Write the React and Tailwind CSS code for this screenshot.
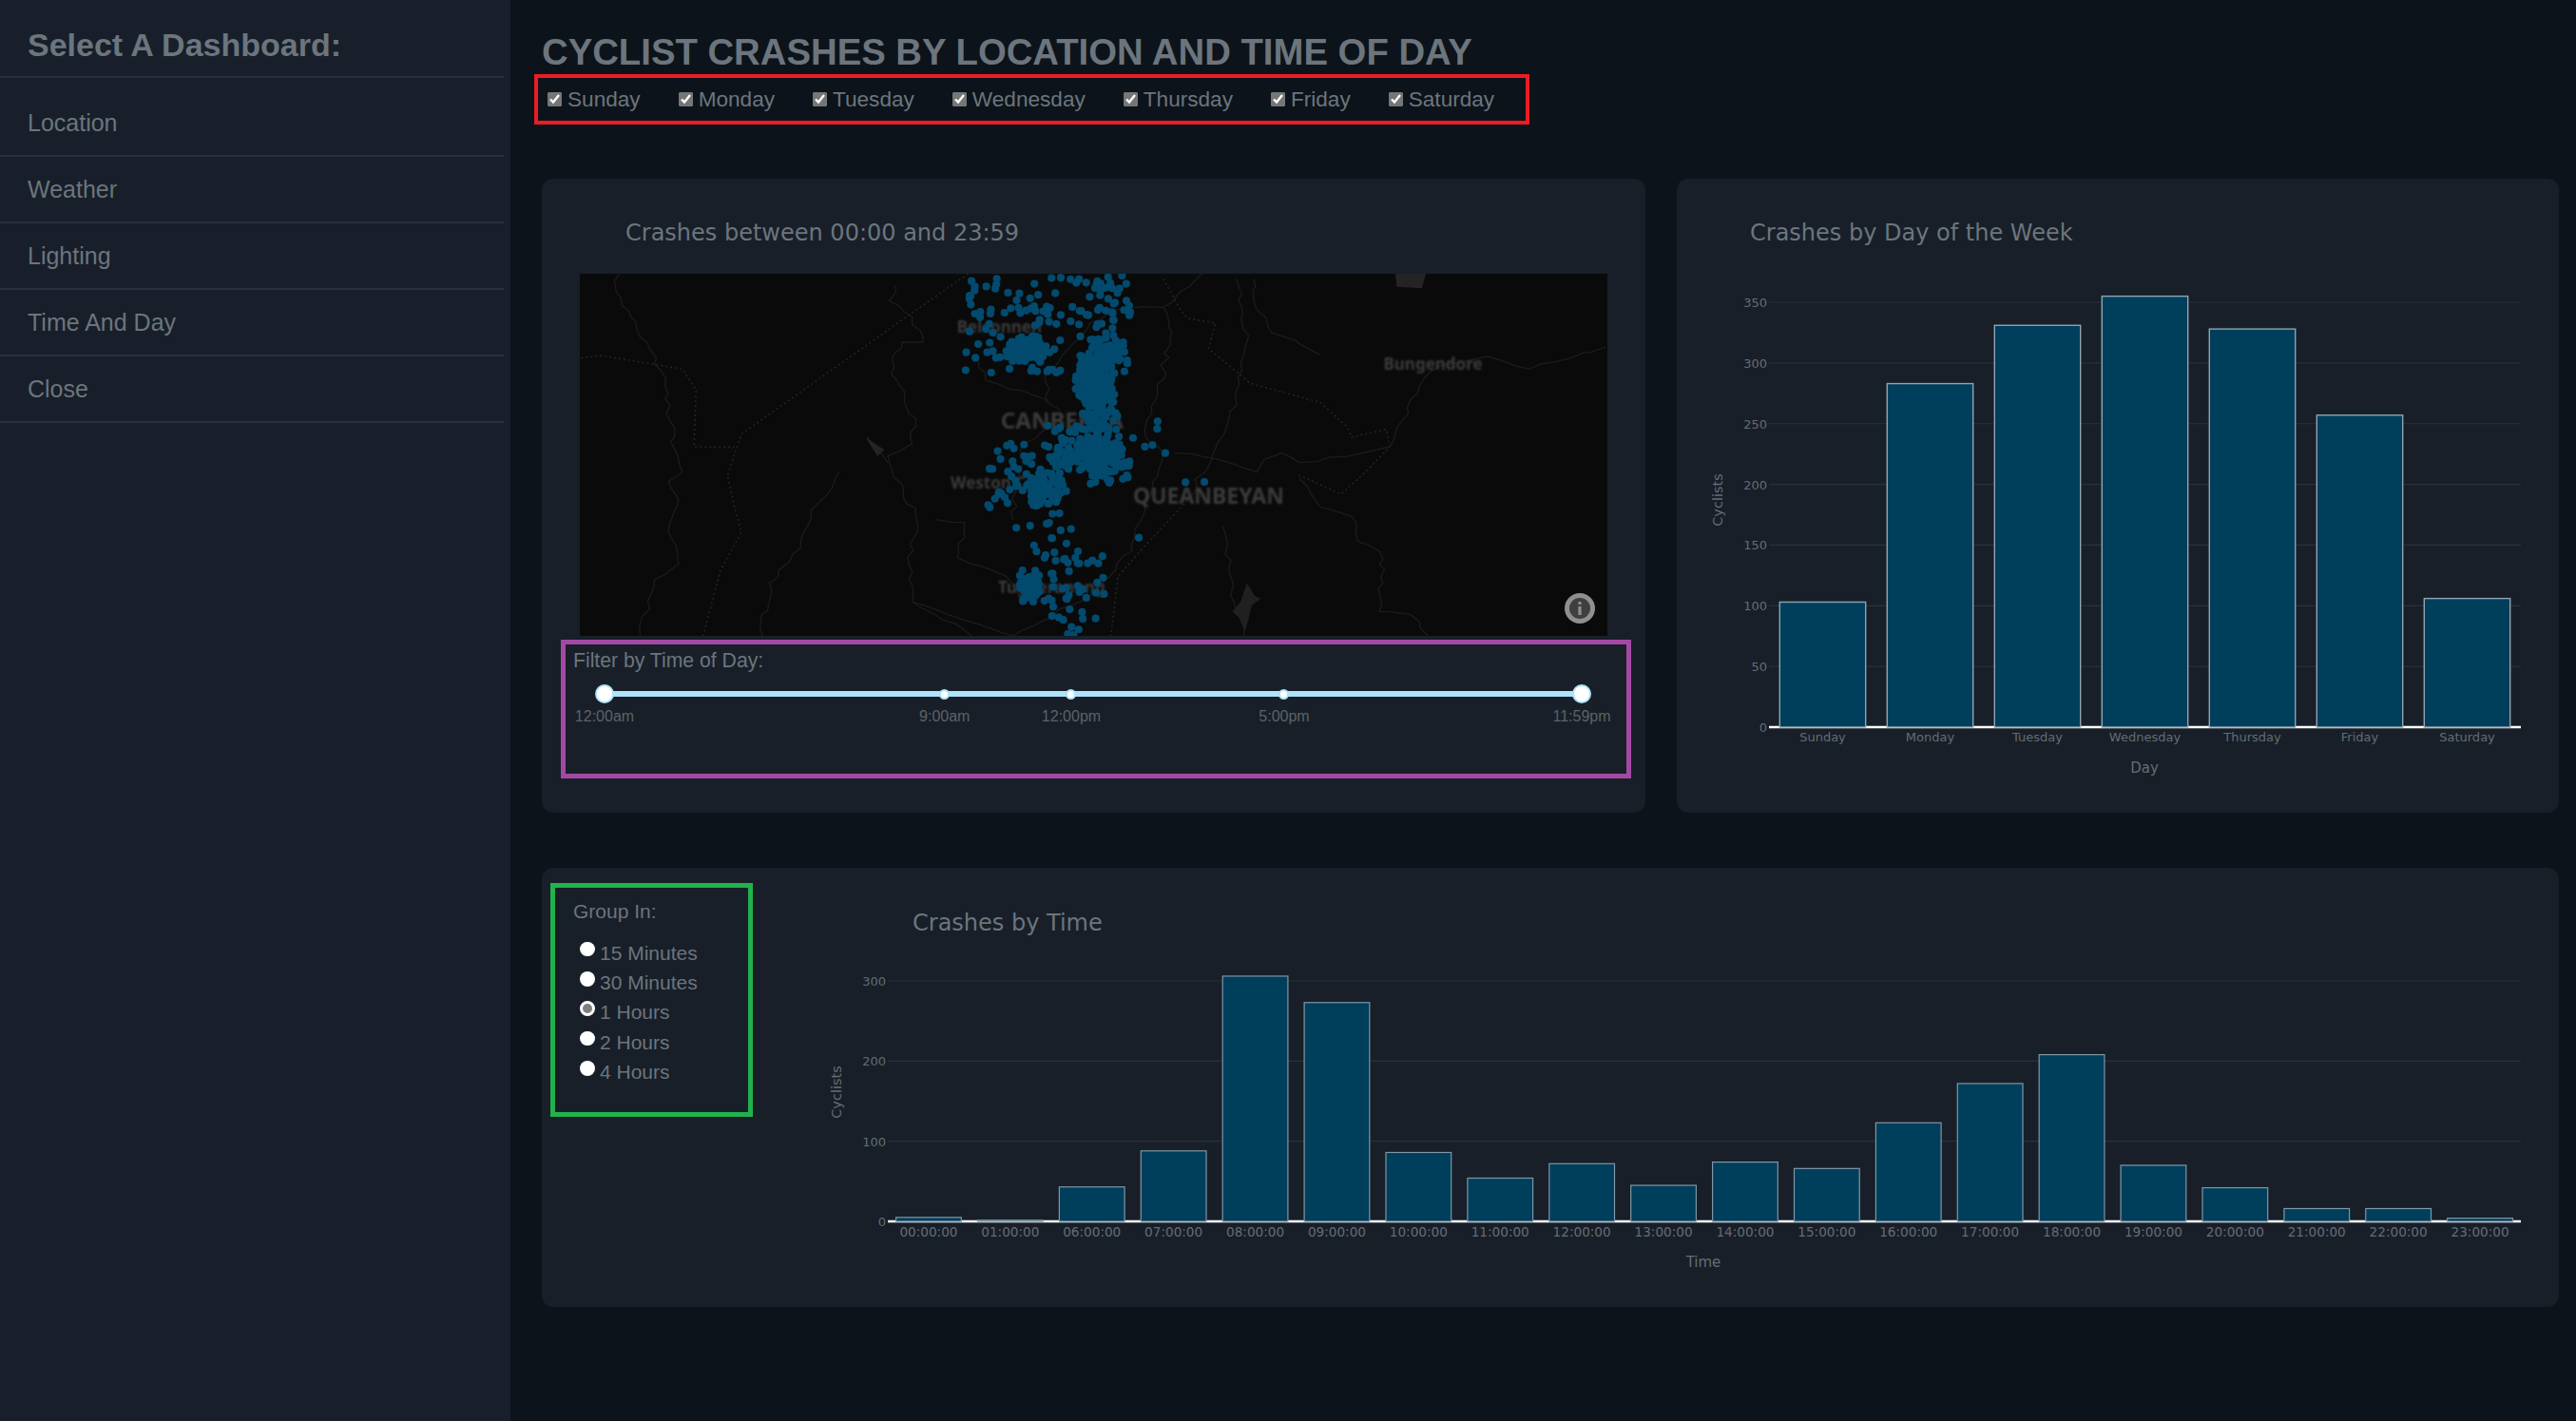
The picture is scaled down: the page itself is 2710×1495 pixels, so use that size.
import React from 'react';

const NAV = ['Location', 'Weather', 'Lighting', 'Time And Day', 'Close'];
const DAYS = ['Sunday', 'Monday', 'Tuesday', 'Wednesday', 'Thursday', 'Friday', 'Saturday'];
const GROUPS = ['15 Minutes', '30 Minutes', '1 Hours', '2 Hours', '4 Hours'];

const SLIDER_MARKS = [
  { label: '12:00am', left: 0, big: true },
  { label: '9:00am', left: 34.8 },
  { label: '12:00pm', left: 47.76 },
  { label: '5:00pm', left: 69.55 },
  { label: '11:59pm', left: 100, big: true },
];

const DAY_VALUES = [103, 283, 331, 355, 328, 257, 106];
const TIME_BARS = [
  ['00:00:00', 5], ['01:00:00', 1.5], ['06:00:00', 43], ['07:00:00', 88], ['08:00:00', 306],
  ['09:00:00', 273], ['10:00:00', 86], ['11:00:00', 54], ['12:00:00', 72], ['13:00:00', 45],
  ['14:00:00', 74], ['15:00:00', 66], ['16:00:00', 123], ['17:00:00', 172], ['18:00:00', 208],
  ['19:00:00', 70], ['20:00:00', 42], ['21:00:00', 16], ['22:00:00', 16], ['23:00:00', 4],
];

/* map outlines, in crop coordinates, scaled down by the group transform */
const MAP_SOLID = [
  '125,84 120,140 150,260 185,390 205,640 215,710 195,740 210,800 195,900 210,1000 175,1050 155,1227',
  '520,120 512,170 545,220 560,300 530,300 515,400 550,540 545,620 510,660 550,850 540,1000 545,1120 630,1227',
  '480,600 510,680',
  '440,710 430,760 400,830 385,950 340,1060 330,1227',
  '1035,100 1040,200 1060,270 1095,295 1130,340',
  '1540,315 1490,350 1430,385 1370,345 1290,390 1260,480 1230,630 1100,680 1075,650 1050,670 1040,710 985,670 920,650',
  '1100,730 1130,820 1175,850 1185,930 1215,960 1220,1060 1215,1150 1260,1160 1285,1227',
  '990,880 1000,1030 1020,1227',
  '960,84 930,140 905,190 915,290 895,480 880,600 905,650 890,740 860,960 800,1100 690,1227',
  '740,490 735,400 800,240 830,200 905,190',
  '580,860 620,870 610,980 680,1040 700,1100',
  '1010,100 1025,300 1010,500 940,800',
  '640,360 650,420 735,480 760,530 700,640 690,860',
  '545,1120 640,1190 690,1227',
];
const MAP_DOTTED = [
  '70,350 100,342 215,385 235,450 232,630 290,632',
  '625,84 540,215 300,590 280,720 290,820 300,900 270,1020 245,1227',
  '905,100 930,200 940,225 980,240 970,320 1030,430 1130,490 1170,570 1175,600 1225,575 1230,630 1200,700 1160,780 1100,720',
  '940,800 880,940 840,1040 830,1227',
];

const MAP_LABELS = [
  ['Belconnen', 670, 255, 17, 700],
  ['CANBERRA', 760, 553, 24, 700],
  ['Weston Creek', 680, 748, 17, 700],
  ['QUEANBEYAN', 970, 790, 23, 700],
  ['Bungendore', 1292, 372, 17, 700],
  ['Tuggeranong', 745, 1078, 17, 700],
];

/* x, y, spread x, spread y, count, all in crop coordinates */
const DOT_CLUSTERS = [
  [705, 320, 34, 42, 70],
  [820, 340, 42, 70, 70],
  [808, 430, 30, 80, 220],
  [815, 530, 30, 60, 40],
  [800, 640, 50, 80, 130],
  [825, 690, 40, 60, 50],
  [735, 760, 36, 60, 70],
  [715, 1075, 18, 50, 40],
];
/* even scatter: left, right, top, bottom, count */
const DOT_SCATTER = [
  [620, 760, 90, 400, 90],
  [770, 860, 85, 330, 55],
  [650, 770, 620, 830, 60],
  [730, 900, 560, 750, 24],
  [680, 780, 840, 960, 12],
  [695, 830, 960, 1110, 40],
  [730, 790, 1110, 1227, 14],
];
const DOT_EXTRA = [[937, 742], [964, 741], [870, 917], [808, 1172], [897, 550], [908, 650]];

function makeRandom(start) {
  let seed = start;
  return () => {
    seed = (seed * 16807) % 2147483647;
    return seed / 2147483647;
  };
}

function buildDots() {
  const rnd = makeRandom(42);
  const dots = [];
  DOT_CLUSTERS.forEach(([cx, cy, sx, sy, n]) => {
    for (let i = 0; i < n; i++) {
      dots.push([cx + (rnd() + rnd() - 1) * sx, cy + (rnd() + rnd() - 1) * sy]);
    }
  });
  DOT_SCATTER.forEach(([l, r, t, b, n]) => {
    for (let i = 0; i < n; i++) {
      dots.push([l + rnd() * (r - l), t + rnd() * (b - t)]);
    }
  });
  return dots.concat(DOT_EXTRA);
}

/* break the outline into short jittered pieces so it reads as terrain */
function wiggle(points, rnd) {
  const pts = points.split(' ').map((p) => p.split(',').map(Number));
  const out = [];
  for (let i = 0; i < pts.length - 1; i++) {
    const [ax, ay] = pts[i];
    const [bx, by] = pts[i + 1];
    const steps = Math.max(1, Math.round(Math.hypot(bx - ax, by - ay) / 22));
    for (let s = 0; s < steps; s++) {
      const t = s / steps;
      const jx = s === 0 ? 0 : (rnd() - 0.5) * 11;
      const jy = s === 0 ? 0 : (rnd() - 0.5) * 11;
      out.push(`${ax + (bx - ax) * t + jx},${ay + (by - ay) * t + jy}`);
    }
  }
  const last = pts[pts.length - 1];
  out.push(`${last[0]},${last[1]}`);
  return out.join(' ');
}

function MapView() {
  const px = (x) => x / 1.3635 - 50;
  const py = (y) => y / 3 - 28;
  const rnd = makeRandom(7);
  return (
    <svg width="1081" height="381" viewBox="0 0 1081 381" className="ml-10 bg-[#0a0a0a] font-['Noto_Sans',sans-serif]">
      <g transform="translate(-50 -28) scale(0.7334 0.3333)" fill="none" stroke="#1c1c1c">
        {MAP_SOLID.map((p, i) => (
          <polyline key={i} points={wiggle(p, rnd)} strokeWidth="1.3" vectorEffect="non-scaling-stroke" />
        ))}
        {MAP_DOTTED.map((p, i) => (
          <polyline key={i} points={p} strokeWidth="1.5" strokeDasharray="2 3" stroke="#252525" vectorEffect="non-scaling-stroke" />
        ))}
        <polygon points="1238,84 1282,84 1276,130 1240,125" fill="#242424" stroke="none" />
        <polygon points="1025,1060 1036,1100 1045,1110 1032,1130 1028,1170 1022,1215 1014,1170 1004,1150 1016,1120" fill="#202020" stroke="none" />
        <polygon points="478,600 505,640 495,660" fill="#242424" stroke="none" />
      </g>
      <g className="blur-[0.8px]" fill="#3b3b3b" textAnchor="middle" dominantBaseline="middle">
        {MAP_LABELS.map(([t, x, y, s, w]) => (
          <text key={t} x={px(x)} y={py(y)} fontSize={s} fontWeight={w}>{t}</text>
        ))}
      </g>
      <g fill="#024a6e">
        {buildDots().map(([x, y], i) => (
          <circle key={i} cx={px(x)} cy={py(y)} r="4.1" />
        ))}
      </g>
      <circle cx="1052" cy="352" r="16" fill="#8f8f8f" />
      <circle cx="1052" cy="352" r="11" fill="#3f3f3f" />
      <circle cx="1052" cy="346.5" r="1.8" fill="#8f8f8f" />
      <rect x="1050.4" y="350" width="3.2" height="9" fill="#8f8f8f" />
    </svg>
  );
}

function TimeSlider() {
  return (
    <div className="relative ml-[41px] mt-[20px] h-[6px] w-[1028px] bg-[#aee3fb]">
      {SLIDER_MARKS.map((m) => (
        <div key={m.label} className="absolute top-1/2" style={{ left: `${m.left}%` }}>
          <div
            className={
              m.big
                ? 'absolute left-[-10px] top-[-10px] h-5 w-5 rounded-full border-2 border-[#aee3fb] bg-white'
                : 'absolute left-[-5.5px] top-[-5.5px] h-[11px] w-[11px] rounded-full border-2 border-[#aee3fb] bg-white'
            }
          />
          <span className="absolute left-0 top-[14px] -translate-x-1/2 whitespace-nowrap text-[16px] leading-[20px] text-[#5e6266]">
            {m.label}
          </span>
        </div>
      ))}
    </div>
  );
}

function DayChart() {
  const zero = 765;
  const unit = 1.2771;
  const left = 1861;
  const right = 2652;
  const pitch = (right - left) / 7;
  return (
    <svg width="928" height="667" viewBox="1764 188 928 667" className="font-['DejaVu_Sans',sans-serif]">
      <text x="1841" y="253" fontSize="24" fill="#6c757d">Crashes by Day of the Week</text>
      {[50, 100, 150, 200, 250, 300, 350].map((v) => (
        <line key={v} x1={left} x2={right} y1={zero - v * unit} y2={zero - v * unit} stroke="#2a313b" strokeWidth="1.2" />
      ))}
      {[0, 50, 100, 150, 200, 250, 300, 350].map((v) => (
        <text key={v} x="1859" y={zero - v * unit + 5} fontSize="13" textAnchor="end" fill="#656c74">{v}</text>
      ))}
      <line x1={left} x2={right} y1={zero} y2={zero} stroke="#ffffff" strokeWidth="2.4" />
      {DAY_VALUES.map((v, i) => (
        <rect
          key={DAYS[i]}
          x={left + pitch * i + pitch * 0.1}
          y={zero - v * unit}
          width={pitch * 0.8}
          height={v * unit}
          fill="#003f5c"
          stroke="#90a4b2"
          strokeWidth="1.4"
        />
      ))}
      {DAYS.map((d, i) => (
        <text key={d} x={left + pitch * (i + 0.5)} y="780" fontSize="13" textAnchor="middle" fill="#656c74">{d}</text>
      ))}
      <text x="2256" y="813" fontSize="15" textAnchor="middle" fill="#656c74">Day</text>
      <text transform="translate(1812 526) rotate(-90)" fontSize="14.5" textAnchor="middle" fill="#656c74">Cyclists</text>
    </svg>
  );
}

function TimeChart() {
  const zero = 1285;
  const unit = 0.8433;
  const left = 934;
  const right = 2652;
  const pitch = (right - left) / TIME_BARS.length;
  return (
    <svg width="1900" height="462" viewBox="792 913 1900 462" className="font-['DejaVu_Sans',sans-serif]">
      <text x="960" y="979" fontSize="24" fill="#6c757d">Crashes by Time</text>
      {[100, 200, 300].map((v) => (
        <line key={v} x1={left} x2={right} y1={zero - v * unit} y2={zero - v * unit} stroke="#2a313b" strokeWidth="1.2" />
      ))}
      {[0, 100, 200, 300].map((v) => (
        <text key={v} x="932" y={zero - v * unit + 5} fontSize="13" textAnchor="end" fill="#656c74">{v}</text>
      ))}
      <line x1={left} x2={right} y1={zero} y2={zero} stroke="#ffffff" strokeWidth="2.4" />
      {TIME_BARS.map(([t, v], i) => (
        <rect
          key={t}
          x={left + pitch * i + pitch * 0.1}
          y={zero - v * unit}
          width={pitch * 0.8}
          height={v * unit}
          fill="#003f5c"
          stroke="#7f97a7"
          strokeWidth="1.2"
        />
      ))}
      {TIME_BARS.map(([t], i) => (
        <text key={t} x={left + pitch * (i + 0.5)} y="1301" fontSize="13.6" textAnchor="middle" fill="#656c74">{t}</text>
      ))}
      <text x="1792" y="1333" fontSize="15" textAnchor="middle" fill="#656c74">Time</text>
      <text transform="translate(885 1149) rotate(-90)" fontSize="14.5" textAnchor="middle" fill="#656c74">Cyclists</text>
    </svg>
  );
}

export default function App() {
  return (
    <div className="flex min-h-screen bg-[#0c131a] font-['Liberation_Sans',Arial,sans-serif] text-[#6c757d]">
      {/* Sidebar */}
      <aside className="w-[537px] shrink-0 bg-[#181f2a]">
        <div className="w-[530px]">
          <h2 className="border-b-2 border-[#2a303b] pb-[16px] pl-[29px] pt-[30px] text-[34px] font-bold leading-[34px]">
            Select A Dashboard:
          </h2>
          <ul className="pt-[13px]">
            {NAV.map((item) => (
              <li key={item} className="flex h-[70px] items-center border-b-2 border-[#2a303b] pl-[29px] text-[25px] leading-[30px]">
                {item}
              </li>
            ))}
          </ul>
        </div>
      </aside>

      {/* Main */}
      <main className="min-w-0 flex-1 pl-[33px] pr-[18px] pt-[36px]">
        <h1 className="mb-[4px] text-[38.3px] font-bold uppercase leading-[38px]">
          Cyclist Crashes by Location and Time of Day
        </h1>
        <div className="-ml-2 flex h-[53px] w-[1047px] items-center border-4 border-[#ed1c24] pl-[10px]">
          {DAYS.map((d) => (
            <label key={d} className="mr-[40px] flex items-center gap-[6px] text-[22.6px] leading-[28px]">
              <input type="checkbox" defaultChecked className="m-0 h-[15px] w-[15px] accent-[#767676]" />
              {d}
            </label>
          ))}
        </div>

        <div className="mt-[57px] flex gap-[33px]">
          <section className="h-[667px] w-[1161px] shrink-0 rounded-xl bg-[#181f29]">
            <p className="mb-[27px] pl-[88px] pt-[42px] font-['DejaVu_Sans',sans-serif] text-[24px] leading-[31px]">
              Crashes between 00:00 and 23:59
            </p>
            <MapView />
            <div className="ml-5 mt-1 h-[146px] w-[1126px] border-[5px] border-[#a349a4]">
              <p className="pl-2 pt-[5px] text-[21.2px] leading-[24px]">Filter by Time of Day:</p>
              <TimeSlider />
            </div>
          </section>
          <section className="h-[667px] flex-1 overflow-hidden rounded-xl bg-[#181f29]">
            <DayChart />
          </section>
        </div>

        <section className="mt-[58px] flex h-[462px] overflow-hidden rounded-xl bg-[#181f29]">
          <div className="ml-[9px] mt-[16px] h-[246px] w-[213px] shrink-0 border-[5px] border-[#22b14c]">
            <p className="pl-[19px] pt-[13px] text-[21px] leading-[24px]">Group In:</p>
            <div className="mt-[16px] pl-[26px]">
              {GROUPS.map((g) => (
                <label key={g} className="flex h-[31.3px] items-center gap-[5.5px] text-[21px] leading-[24px]">
                  <input
                    type="radio"
                    name="group"
                    defaultChecked={g === '1 Hours'}
                    className="m-0 mb-2 h-[15.5px] w-[15.5px] appearance-none rounded-full bg-white checked:border-[3px] checked:border-white checked:bg-[#7f7f7f]"
                  />
                  {g}
                </label>
              ))}
            </div>
          </div>
          <TimeChart />
        </section>
      </main>
    </div>
  );
}
